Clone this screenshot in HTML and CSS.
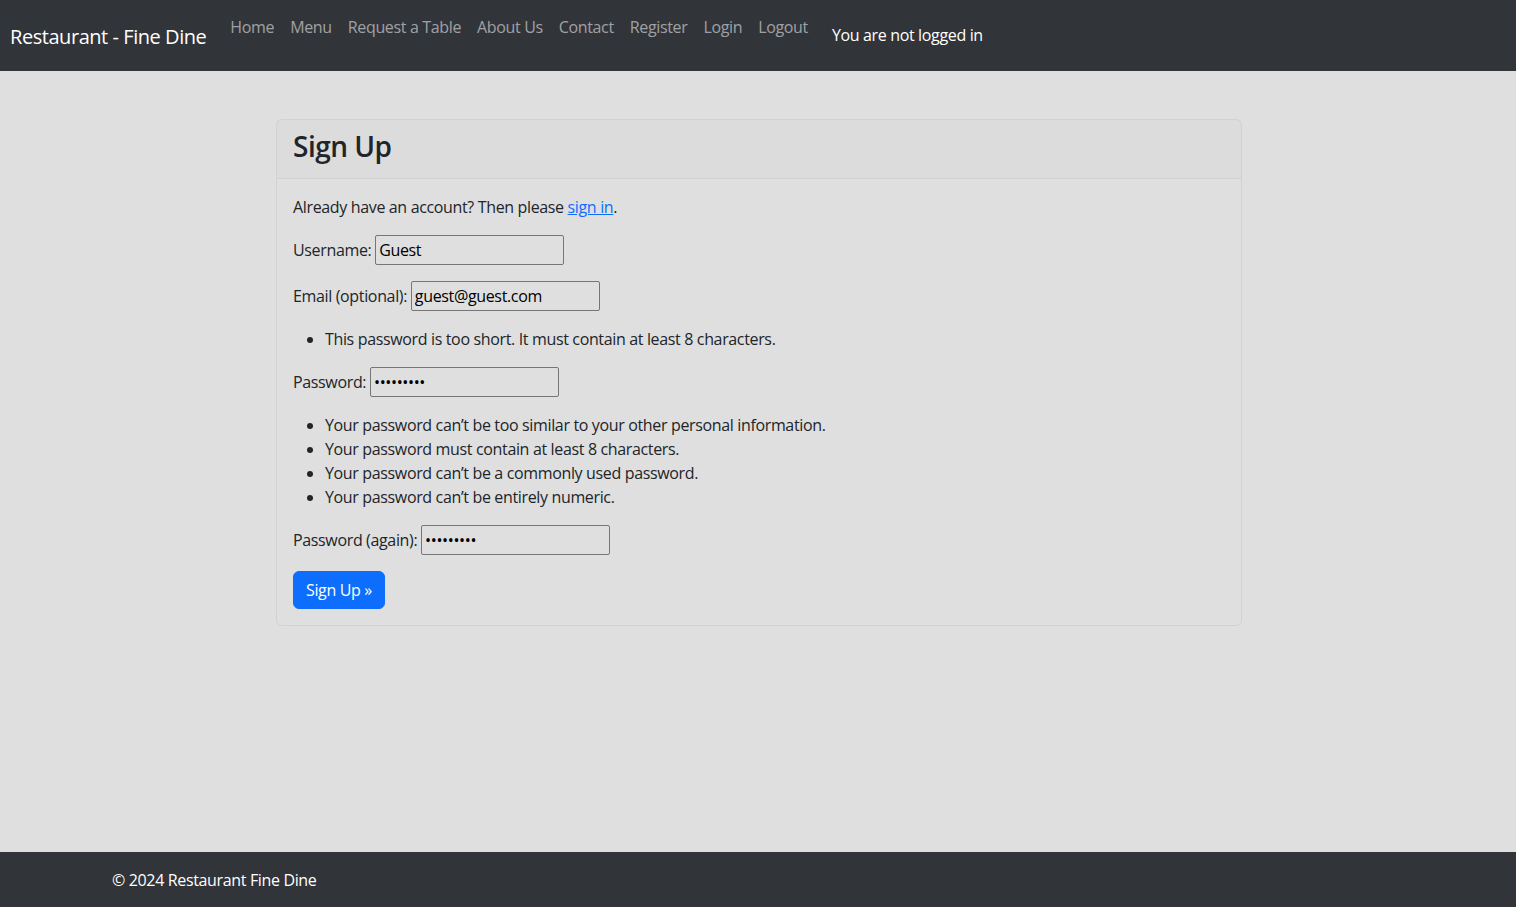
FILE: index.html
```html
<!DOCTYPE html>
<html lang="en">
<head>
<meta charset="utf-8">
<title>Sign Up</title>
<link rel="stylesheet" href="styles.css">
</head>
<body>
<nav class="navbar">
  <a class="brand" href="#">Restaurant - Fine Dine</a>
  <ul class="nav-links">
    <li><a href="#">Home</a></li>
    <li><a href="#">Menu</a></li>
    <li><a href="#">Request a Table</a></li>
    <li><a href="#">About Us</a></li>
    <li><a href="#">Contact</a></li>
    <li><a href="#">Register</a></li>
    <li><a href="#">Login</a></li>
    <li><a href="#">Logout</a></li>
  </ul>
  <span class="status">You are not logged in</span>
</nav>
<main class="main">
  <div class="card">
    <div class="card-header"><h3>Sign Up</h3></div>
    <div class="card-body">
      <p>Already have an account? Then please <a class="link" href="#">sign in</a>.</p>
      <form class="signup">
        <p><label>Username:</label> <input type="text" value="Guest"></p>
        <p><label>Email (optional):</label> <input type="text" value="guest@guest.com"></p>
        <ul class="errors"><li>This password is too short. It must contain at least 8 characters.</li></ul>
        <p><label>Password:</label> <input type="password" value="123456789"></p>
        <ul class="help">
          <li>Your password can’t be too similar to your other personal information.</li>
          <li>Your password must contain at least 8 characters.</li>
          <li>Your password can’t be a commonly used password.</li>
          <li>Your password can’t be entirely numeric.</li>
        </ul>
        <p><label>Password (again):</label> <input type="password" value="123456789"></p>
        <button type="button" class="btn">Sign Up »</button>
      </form>
    </div>
  </div>
</main>
<footer class="footer">
  <span>© 2024 Restaurant Fine Dine</span>
</footer>
</body>
</html>
```
FILE: styles.css
```css
* { box-sizing: border-box; }
html, body { margin: 0; padding: 0; }
body {
  font-family: "Open Sans", "Noto Sans", sans-serif;
  font-size: 16px;
  line-height: 1.5;
  letter-spacing: -0.35px;
  color: #212529;
  background: #dfdfdf;
  min-height: 100vh;
  display: flex;
  flex-direction: column;
}
.navbar {
  background: #313439;
  height: 71px;
  display: flex;
  align-items: flex-start;
  padding: 0 10px;
}
.brand {
  color: #fff;
  text-decoration: none;
  font-size: 20px;
  letter-spacing: -0.45px;
  margin-top: 22px;
  margin-right: 16px;
}
.nav-links {
  list-style: none;
  margin: 0;
  padding: 0;
  display: flex;
  margin-top: 15px;
}
.nav-links a {
  display: block;
  color: rgba(255,255,255,0.55);
  text-decoration: none;
  padding: 0 8px;
}
.status {
  color: #fff;
  margin-top: 23px;
  margin-left: 16px;
}
.main { flex: 1; padding-top: 48px; padding-left: 2px; }
.card {
  width: 966px;
  margin: 0 auto;
  border: 1px solid #d2d2d2;
  border-radius: 6px;
}
.card-header {
  padding: 5px 16px 11px;
  border-bottom: 1px solid #d2d2d2;
  background: rgba(0,0,0,0.01);
}
.card-header h3 {
  margin: 0;
  font-size: 28px;
  font-weight: 600;
  letter-spacing: -0.5px;
  line-height: 1.5;
}
.card-body { padding: 16px; }
.card-body p { margin: 0 0 16px; }
.link { color: #0d6efd; }
input {
  font-family: inherit;
  font-size: 16px;
  letter-spacing: inherit;
  width: 189px;
  height: 30px;
  padding: 1px 3px;
  border: 1px solid #767676;
  border-radius: 2px;
  background: transparent;
  color: #000;
}
ul.errors, ul.help { margin: 0 0 16px; padding-left: 32px; }
.btn {
  font-family: inherit;
  font-size: 16px;
  letter-spacing: inherit;
  background: #0d6efd;
  color: #fff;
  border: 1px solid #0d6efd;
  border-radius: 6px;
  padding: 6px 12px;
  line-height: 1.5;
}
.footer {
  background: #313439;
  height: 55px;
  color: #fff;
  padding: 16px 112px 0;
}
```
